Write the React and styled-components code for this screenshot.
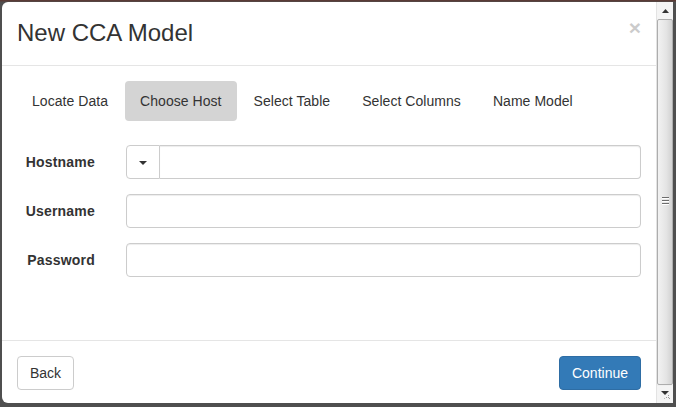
import React from "react";
import styled, { createGlobalStyle } from "styled-components";

const GlobalStyle = createGlobalStyle`
  html, body {
    margin: 0;
    padding: 0;
    background: #4f4f4f;
  }
  body {
    font-family: "Liberation Sans", Arial, Helvetica, sans-serif;
    font-size: 14px;
    line-height: 20px;
    color: #333;
  }
  * {
    box-sizing: border-box;
  }
`;

const Page = styled.div`
  width: 676px;
  height: 407px;
  padding: 2px 3px 4px 2px;
  background: linear-gradient(#5a3b36 0, #5a3b36 1px, #4f4f4f 2px);
  overflow: hidden;
`;

const Frame = styled.div`
  display: flex;
  height: 100%;
  background: #fff;
  border-radius: 6px 0 0 6px;
  overflow: hidden;
`;

const Modal = styled.div`
  flex: 1;
  display: flex;
  flex-direction: column;
  min-width: 0;
`;

const Header = styled.div`
  display: flex;
  align-items: flex-start;
  justify-content: space-between;
  padding: 14px 15px 16px;
  border-bottom: 1px solid #e5e5e5;
`;

const Title = styled.h4`
  margin: 0;
  font-size: 24px;
  font-weight: 400;
  line-height: 33px;
  color: #333;
`;

const Close = styled.button`
  margin-top: 1px;
  padding: 0;
  border: 0;
  background: transparent;
  font-family: "Liberation Sans", Arial, sans-serif;
  font-size: 21px;
  font-weight: 700;
  line-height: 21px;
  color: #000;
  opacity: 0.2;
  cursor: pointer;
`;

const Body = styled.div`
  flex: 1;
  padding: 15px;
`;

const Pills = styled.ul`
  display: flex;
  margin: 0 0 24px;
  padding: 0;
  list-style: none;
`;

const Pill = styled.li`
  margin-left: ${(p) => (p.$first ? "0" : "2px")};
  padding: 10px 15px;
  border-radius: 4px;
  background: ${(p) => (p.$active ? "#d4d4d4" : "transparent")};
  color: #333;
  letter-spacing: 0.05px;
`;

const Form = styled.div`
  display: flex;
  flex-direction: column;
  gap: 15px;
`;

const Row = styled.div`
  display: grid;
  grid-template-columns: 79px 1fr;
  column-gap: 30px;
  align-items: center;
`;

const Label = styled.label`
  text-align: right;
  font-weight: 700;
  letter-spacing: 0.2px;
  padding-right: 1px;
`;

const Input = styled.input`
  display: block;
  width: 100%;
  min-width: 0;
  height: 34px;
  padding: 6px 12px;
  border: 1px solid #ccc;
  border-radius: ${(p) => (p.$joined ? "0 4px 4px 0" : "4px")};
  border-left-width: ${(p) => (p.$joined ? "0" : "1px")};
  box-shadow: inset 0 1px 1px rgba(0, 0, 0, 0.075);
  font: inherit;
  color: #555;
  background: #fff;
`;

const InputGroup = styled.div`
  display: flex;
`;

const AddonButton = styled.button`
  flex-shrink: 0;
  display: flex;
  align-items: center;
  justify-content: center;
  width: 34px;
  height: 34px;
  padding: 0;
  border: 1px solid #ccc;
  border-radius: 4px 0 0 4px;
  background: #fff;
`;

const Caret = styled.span`
  width: 0;
  height: 0;
  margin-top: 2px;
  border-top: 4px solid #333;
  border-left: 4px solid transparent;
  border-right: 4px solid transparent;
`;

const Footer = styled.div`
  display: flex;
  justify-content: space-between;
  padding: 15px 15px 13px;
  border-top: 1px solid #e5e5e5;
`;

const Button = styled.button`
  height: 34px;
  padding: 6px 12px;
  border: 1px solid ${(p) => (p.$primary ? "#2e6da4" : "#ccc")};
  border-radius: 4px;
  background: ${(p) => (p.$primary ? "#337ab7" : "#fff")};
  color: ${(p) => (p.$primary ? "#fff" : "#333")};
  font: inherit;
`;

/* fake classic scrollbar on the right of the dialog */
const Scrollbar = styled.div`
  width: 17px;
  display: flex;
  flex-direction: column;
  background: #f0f0f0;
  border-left: 1px solid #e3e3e3;
`;

const ArrowBox = styled.div`
  height: 17px;
  display: flex;
  align-items: center;
  justify-content: center;
  background: #f4f4f4;
`;

const Thumb = styled.div`
  flex: 1;
  display: flex;
  align-items: center;
  justify-content: center;
  margin: 0 0 1px;
  border: 1px solid #adadad;
  border-radius: 2px;
  background: linear-gradient(to right, #f2f2f2, #e4e4e4 60%, #d2d2d2);
`;

const Grip = styled.div`
  display: flex;
  flex-direction: column;
  gap: 2px;
  margin-top: -4px;

  span {
    display: block;
    width: 7px;
    height: 1px;
    background: #6d6d6d;
    box-shadow: 0 1px 0 #fff;
  }
`;

const UpArrow = () => (
  <svg width="7" height="4" viewBox="0 0 7 4">
    <polygon points="3.5,0 7,4 0,4" fill="#333" />
  </svg>
);

const DownArrow = () => (
  <svg width="11" height="11" viewBox="0 0 11 11">
    <polygon points="1,2 9,2 5,6" fill="#333" />
    <rect x="8" y="6" width="1" height="1" fill="#999" />
    <rect x="6" y="8" width="1" height="1" fill="#999" />
    <rect x="8" y="8" width="1" height="1" fill="#999" />
    <rect x="4" y="9" width="1" height="1" fill="#bbb" />
    <rect x="9" y="9" width="1" height="1" fill="#999" />
  </svg>
);

const steps = ["Locate Data", "Choose Host", "Select Table", "Select Columns", "Name Model"];

export default function App() {
  return (
    <>
      <GlobalStyle />
      <Page>
        <Frame>
          <Modal>
            <Header>
              <Title>New CCA Model</Title>
              <Close>×</Close>
            </Header>
            <Body>
              <Pills>
                {steps.map((s, i) => (
                  <Pill key={s} $first={i === 0} $active={s === "Choose Host"}>
                    {s}
                  </Pill>
                ))}
              </Pills>
              <Form>
                <Row>
                  <Label>Hostname</Label>
                  <InputGroup>
                    <AddonButton>
                      <Caret />
                    </AddonButton>
                    <Input $joined />
                  </InputGroup>
                </Row>
                <Row>
                  <Label>Username</Label>
                  <Input />
                </Row>
                <Row>
                  <Label>Password</Label>
                  <Input type="password" />
                </Row>
              </Form>
            </Body>
            <Footer>
              <Button>Back</Button>
              <Button $primary>Continue</Button>
            </Footer>
          </Modal>
          <Scrollbar>
            <ArrowBox>
              <UpArrow />
            </ArrowBox>
            <Thumb>
              <Grip>
                <span />
                <span />
                <span />
              </Grip>
            </Thumb>
            <ArrowBox>
              <DownArrow />
            </ArrowBox>
          </Scrollbar>
        </Frame>
      </Page>
    </>
  );
}
